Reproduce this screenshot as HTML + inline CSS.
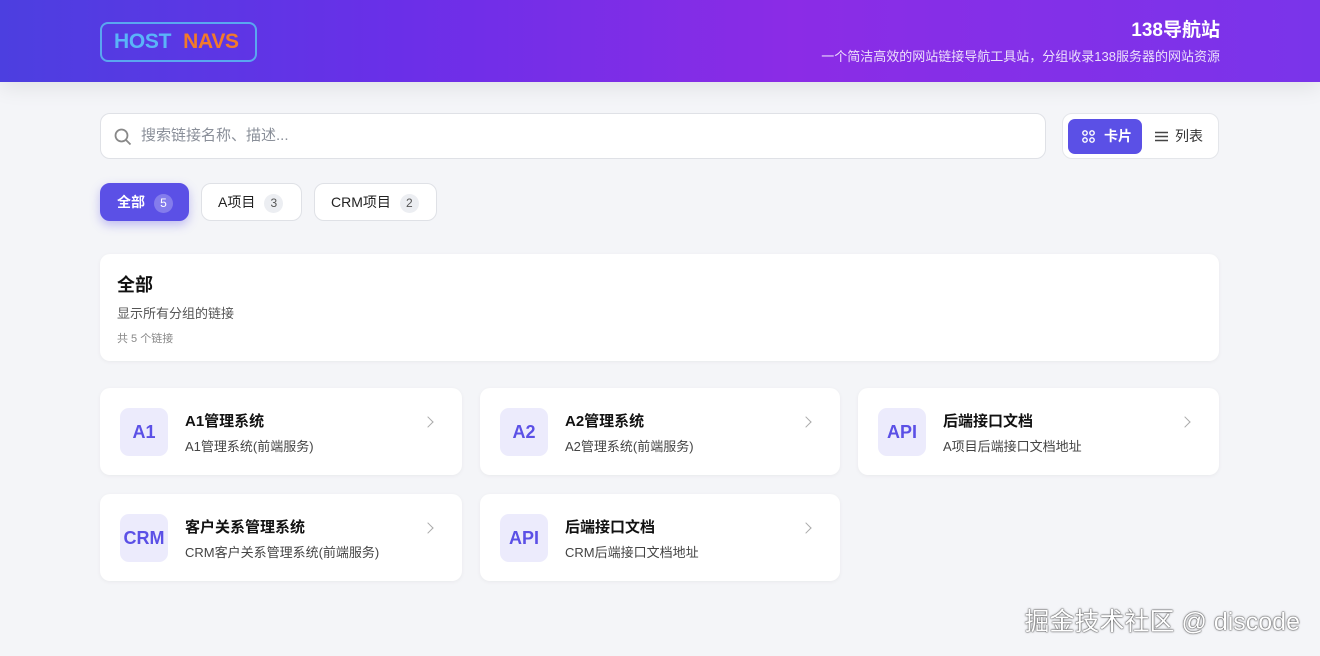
<!DOCTYPE html>
<html><head><meta charset="utf-8"><style>
*{box-sizing:border-box;margin:0;padding:0}
body{width:1320px;height:656px;overflow:hidden;background:#f4f5f8;font-family:"Liberation Sans","Noto Sans CJK SC",sans-serif;position:relative}
.hd{height:82px;background:linear-gradient(90deg,#4c3fe0 0%,#6a2fe8 30%,#8b2ce6 60%,#7a34ea 100%);position:relative;box-shadow:0 6px 20px rgba(0,0,0,.08)}
.logo{position:absolute;left:100px;top:22px;width:157px;height:40px;border:2px solid #5aa6f0;border-radius:8px;font-weight:bold;font-size:21px;line-height:36px;padding-left:12px;letter-spacing:-.3px}
.logo .a{color:#5ab4f8}.logo .b{color:#f27a2a;margin-left:12px}
.ht{position:absolute;right:100px;top:19px;text-align:right;color:#fff}
.ht h1{font-size:19px;font-weight:bold;line-height:24px}
.ht p{font-size:13px;opacity:.85;margin-top:3px}
.search{position:absolute;left:100px;top:113px;width:946px;height:46px;background:#fff;border:1px solid #dfe1e6;border-radius:10px;font-size:15px;color:#8a8f99;line-height:44px;padding-left:40px}
.search svg{position:absolute;left:13px;top:14px}
.tog{position:absolute;left:1062px;top:113px;width:157px;height:46px;background:#fff;border:1px solid #e4e6ea;border-radius:10px}
.tog .on{position:absolute;left:5px;top:5px;width:74px;height:35px;background:#5b50e6;border-radius:7px;color:#fff;font-size:14px;font-weight:bold;line-height:35px;padding-left:36px}
.tog .off{position:absolute;left:92px;top:5px;height:35px;line-height:35px;font-size:14px;color:#333;padding-left:20px}
.tab{position:absolute;top:183px;height:38px;border-radius:10px;font-size:14px;line-height:36px;padding-left:16px;background:#fff;border:1px solid #dfe1e6;color:#222}
.tab span{display:inline-block;width:19px;height:19px;border-radius:50%;background:#eceef2;font-size:12px;line-height:19px;text-align:center;margin-left:9px;color:#555}
.tab.act{background:#5b50e6;border-color:#5b50e6;color:#fff;font-weight:bold;box-shadow:0 4px 10px rgba(91,80,230,.35)}
.tab.act span{background:rgba(255,255,255,.25);color:#fff;font-weight:normal}
.info{position:absolute;left:100px;top:254px;width:1119px;height:107px;background:#fff;border-radius:10px;box-shadow:0 1px 4px rgba(0,0,0,.05);padding:17px 17px}
.info h2{font-size:18px;font-weight:bold;color:#111}
.info p{font-size:13px;color:#555;margin-top:6px}
.info small{display:block;font-size:11px;color:#888;margin-top:8px}
.card{position:absolute;height:87px;background:#fff;border-radius:10px;box-shadow:0 1px 4px rgba(0,0,0,.05)}
.ic{position:absolute;left:20px;top:20px;width:48px;height:48px;border-radius:9px;background:#ecebfc;color:#5b50e6;font-weight:bold;font-size:18px;text-align:center;line-height:48px}
.card h3{position:absolute;left:85px;top:22px;font-size:15px;font-weight:bold;color:#111}
.card p{position:absolute;left:85px;top:48px;font-size:13px;color:#444}
.card i{position:absolute;right:30px;top:30px;width:8px;height:8px;border-top:1.5px solid #aaa;border-right:1.5px solid #aaa;transform:rotate(45deg)}
.wm{position:absolute;right:20px;bottom:18px;color:#fff;font-size:25px;text-shadow:0 0 2px rgba(0,0,0,.6),0 0 1px #000}
</style></head><body>
<div class="hd">
<div class="logo"><span class="a">HOST</span><span class="b">NAVS</span></div>
<div class="ht"><h1>138导航站</h1><p>一个简洁高效的网站链接导航工具站，分组收录138服务器的网站资源</p></div>
</div>
<div class="search"><svg width="18" height="18" viewBox="0 0 18 18" fill="none" stroke="#888" stroke-width="1.8"><circle cx="7.5" cy="7.5" r="6"/><path d="M12 12l4.5 4.5"/></svg>搜索链接名称、描述...</div>
<div class="tog"><div class="on"><svg style="position:absolute;left:14px;top:11px" width="13" height="13" viewBox="0 0 13 13" fill="none" stroke="#fff" stroke-width="1.4"><circle cx="3" cy="3" r="2.2"/><circle cx="10" cy="3" r="2.2"/><circle cx="3" cy="10" r="2.2"/><circle cx="10" cy="10" r="2.2"/></svg>卡片</div><div class="off"><svg style="position:absolute;left:0;top:12px" width="13" height="11" viewBox="0 0 13 11" stroke="#444" stroke-width="1.6"><path d="M0 1.5h13M0 5.5h13M0 9.5h13"/></svg>列表</div></div>
<div class="tab act" style="left:100px;width:89px">全部<span>5</span></div>
<div class="tab" style="left:201px;width:101px">A项目<span>3</span></div>
<div class="tab" style="left:314px;width:123px">CRM项目<span>2</span></div>
<div class="info"><h2>全部</h2><p>显示所有分组的链接</p><small>共 5 个链接</small></div>
<div class="card" style="left:100px;top:388px;width:362px"><div class="ic">A1</div><h3>A1管理系统</h3><p>A1管理系统(前端服务)</p><i></i></div>
<div class="card" style="left:480px;top:388px;width:360px"><div class="ic">A2</div><h3>A2管理系统</h3><p>A2管理系统(前端服务)</p><i></i></div>
<div class="card" style="left:858px;top:388px;width:361px"><div class="ic">API</div><h3>后端接口文档</h3><p>A项目后端接口文档地址</p><i></i></div>
<div class="card" style="left:100px;top:494px;width:362px"><div class="ic">CRM</div><h3>客户关系管理系统</h3><p>CRM客户关系管理系统(前端服务)</p><i></i></div>
<div class="card" style="left:480px;top:494px;width:360px"><div class="ic">API</div><h3>后端接口文档</h3><p>CRM后端接口文档地址</p><i></i></div>
<div class="wm">掘金技术社区 @ discode</div>
</body></html>
